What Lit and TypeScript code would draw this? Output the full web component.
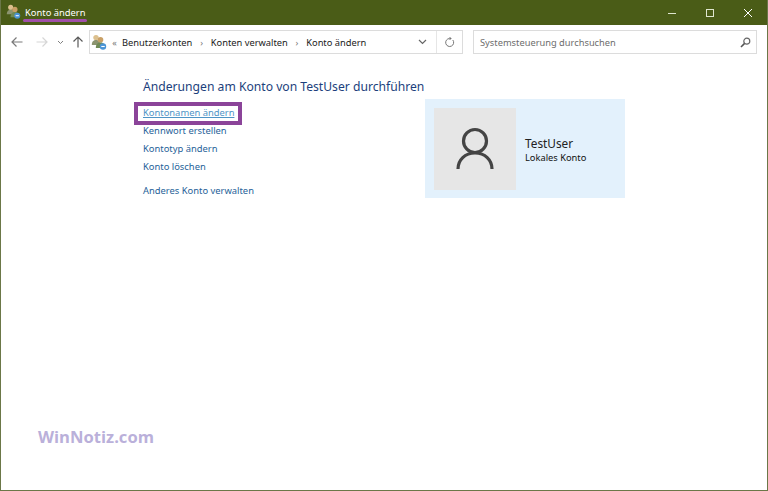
import { LitElement, html, css } from "lit";
import { customElement } from "lit/decorators.js";

const usersIcon = (size: number) => html`<svg width=${size} height=${size} viewBox="0 0 16 16">
  <circle cx="5" cy="3.600" r="2.700" fill="#dcc08e"/><path d="M.8 11c0-3.600 1.800-5 4.200-5s4.200 1.400 4.200 5z" fill="#8c9470"/>
  <circle cx="9.500" cy="5.800" r="2.800" fill="#c9a066"/><path d="M4.800 14c0-4 2-5.600 4.700-5.600s4.700 1.600 4.700 5.600z" fill="#6f8a55"/>
  <circle cx="12" cy="12.500" r="3.200" fill="#4a94d6"/><path d="M10.300 12.500h3.400" stroke="#fff" stroke-width="1.100"/>
</svg>`;

@customElement("app-root")
export class AppRoot extends LitElement {
  static styles = css`
    :host { display: block; width: 768px; height: 491px; background: #fff; position: relative; overflow: hidden;
      font-family: "Noto Sans", "Open Sans", sans-serif; color: #1a1a1a; }
    .frame { position: absolute; inset: 0; border: solid #6b7748; border-width: 0 1px 1px 1px; pointer-events: none; }
    .title { height: 25px; background: #4a5c17; display: flex; align-items: center; color: #fff; font-size: 9.400px; position: relative; }
    .title .ico { display: flex; margin-left: 6px; margin-right: 4px; position: relative; top: -1px; }
    .title .name { position: relative; top: 0; }
    .mark { position: absolute; left: 23px; top: 19px; width: 64px; height: 3px; background: #a04fa8; border-radius: 2px; }
    .wc { margin-left: auto; display: flex; height: 100%; padding-right: 1px; }
    .wc div { width: 38px; display: flex; align-items: center; justify-content: center; }
    .wc svg { display: block; }
    .nav { height: 34px; display: flex; align-items: center; padding: 0 11px 0 0; }
    .navbtns { width: 89px; display: flex; align-items: center; flex: none; position: relative; height: 100%; }
    .navbtns svg { position: absolute; }
    .addr { width: 374px; height: 24px; border: 1px solid #dcdcdc; box-sizing: border-box; display: flex; align-items: center; font-size: 9.300px; flex: none; }
    .addr .crumbs { display: flex; align-items: center; flex: 1; min-width: 0; padding-left: 1px; }
    .addr .sep { color: #777; width: 18.500px; text-align: center; font-size: 9px; }
    .addr .ll { color: #777; width: 15px; text-align: center; font-size: 9px; }
    .addr .drop { width: 26px; display: flex; justify-content: center; margin-right: 1px; }
    .addr .ref { width: 26px; height: 100%; box-sizing: border-box; border-left: 1px solid #e6e6e6; display: flex; align-items: center; justify-content: center; }
    .search { margin-left: 10px; flex: 1; height: 24px; border: 1px solid #dcdcdc; box-sizing: border-box; display: flex; align-items: center; padding: 0 5px 0 6px; font-size: 9.300px; color: #6d6d6d; justify-content: space-between; }
    .main { display: grid; grid-template-columns: 282px 200px; padding: 19px 0 0 143px; }
    h1 { grid-column: 1 / 3; margin: 0 0 4px; font-size: 12.150px; font-weight: 400; color: #1c3f7c; line-height: 17px; white-space: nowrap; height: 17px; }
    .links { display: flex; flex-direction: column; font-size: 9.400px; color: #1f6299; padding-top: 5px; }
    .links span { height: 18px; line-height: 18px; white-space: nowrap; }
    .links .gap { margin-top: 6px; }
    .first { position: relative; color: #4f94c6; text-decoration: underline; }
    .box { position: absolute; left: -9px; top: -2px; width: 108px; height: 23px; box-sizing: border-box; border: 4px solid #8b4499; }
    .card { background: #e3f1fc; height: 99px; box-sizing: border-box; padding: 9px; display: flex; align-items: center; }
    .avatar { width: 82px; height: 82px; background: #e6e6e6; display: flex; align-items: center; justify-content: center; margin-right: 9px; flex: none; }
    .cname { font-size: 11.800px; color: #222; line-height: 16px; margin-top: 1px; }
    .csub { font-size: 9.300px; color: #111; line-height: 13px; }
    .wm { position: absolute; left: 38px; top: 427px; font-family: "Open Sans", sans-serif; font-weight: 700; font-size: 16.600px; color: #bab0da; line-height: 20px; }
  `;

  render() {
    return html`
      <div class="title">
        <span class="ico">${usersIcon(15)}</span><span class="name">Konto ändern</span>
        <div class="mark"></div>
        <div class="wc">
          <div><svg width="10" height="10" viewBox="0 0 10 10"><path d="M1 5.500h8" stroke="#dfe6cf" stroke-width="1"/></svg></div>
          <div><svg width="10" height="10" viewBox="0 0 10 10"><rect x="1.500" y="1.500" width="7" height="7" fill="none" stroke="#dfe6cf"/></svg></div>
          <div><svg width="10" height="10" viewBox="0 0 10 10"><path d="M1 1l8 8M9 1l-8 8" stroke="#fff" fill="none"/></svg></div>
        </div>
      </div>
      <div class="nav">
        <div class="navbtns">
          <svg style="left:11px" width="12" height="12" viewBox="0 0 12 12"><path d="M11.500 6H1M5.500 1.500L1 6l4.500 4.500" fill="none" stroke="#7a7a7a" stroke-width="1.200"/></svg>
          <svg style="left:36px" width="12" height="12" viewBox="0 0 12 12"><path d="M.5 6H11M6.500 1.500L11 6l-4.500 4.500" fill="none" stroke="#d6d6d6" stroke-width="1.200"/></svg>
          <svg style="left:57px" width="7" height="7" viewBox="0 0 7 7"><path d="M1 2l2.500 2.500L6 2" fill="none" stroke="#808080" stroke-width="1"/></svg>
          <svg style="left:72px" width="12" height="12" viewBox="0 0 12 12"><path d="M6 11.500V1M1.500 5.500L6 1l4.500 4.500" fill="none" stroke="#5a5a5a" stroke-width="1.200"/></svg>
        </div>
        <div class="addr">
          <div class="crumbs">
            ${usersIcon(16)}<span class="ll">«</span><span>Benutzerkonten</span><span class="sep">›</span><span>Konten verwalten</span><span class="sep">›</span><span>Konto ändern</span>
          </div>
          <div class="drop"><svg width="9" height="6" viewBox="0 0 9 6"><path d="M1 1l3.500 3.500L8 1" fill="none" stroke="#666" stroke-width="1.200"/></svg></div>
          <div class="ref"><svg width="11" height="11" viewBox="0 0 11 11"><path d="M8.800 3A4 4 0 1 1 5.500 1.500H7M5.500 0L7 1.500 5.500 3" fill="none" stroke="#777" stroke-width="1"/></svg></div>
        </div>
        <div class="search"><span>Systemsteuerung durchsuchen</span>
          <svg width="11" height="11" viewBox="0 0 11 11"><circle cx="6.800" cy="4.200" r="3" fill="none" stroke="#666" stroke-width="1.200"/><path d="M4.600 6.400L1 10" stroke="#555" stroke-width="1.600"/></svg>
        </div>
      </div>
      <div class="main">
        <h1>Änderungen am Konto von TestUser durchführen</h1>
        <div class="links">
          <span class="first">Kontonamen ändern<div class="box"></div></span>
          <span>Kennwort erstellen</span>
          <span>Kontotyp ändern</span>
          <span>Konto löschen</span>
          <span class="gap">Anderes Konto verwalten</span>
        </div>
        <div class="card">
          <div class="avatar">
            <svg width="38" height="44" viewBox="0 0 38 44"><circle cx="19" cy="14" r="11.500" fill="none" stroke="#444" stroke-width="3.200"/><path d="M2 42c0-9 7-16 17-16s17 7 17 16" fill="none" stroke="#444" stroke-width="3.200"/></svg>
          </div>
          <div><div class="cname">TestUser</div><div class="csub">Lokales Konto</div></div>
        </div>
      </div>
      <div class="wm">WinNotiz.com</div>
      <div class="frame"></div>
    `;
  }
}
